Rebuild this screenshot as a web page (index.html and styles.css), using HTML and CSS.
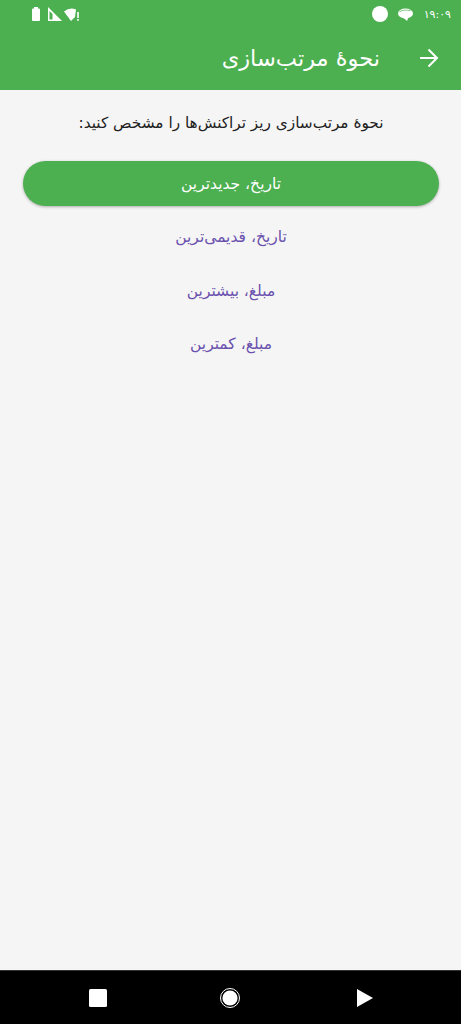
FILE: index.html
```html
<!DOCTYPE html>
<html lang="fa" dir="rtl">
<head>
<meta charset="utf-8">
<title>نحوهٔ مرتب‌سازی</title>
<link rel="stylesheet" href="styles.css">
</head>
<body>
<div class="screen">
  <header class="top">
    <div class="status">
      <div class="status-group">
        <span class="time">۱۹:۰۹</span>
        <svg width="15" height="13" viewBox="0 0 15 13"><ellipse cx="7.500" cy="5.500" rx="7.500" ry="5" fill="#fff"/><path d="M4.500 9L9 13L10.500 9Z" fill="#fff"/><path d="M1.500 4C4 1.800 8.500 1.600 12.500 2.800" fill="none" stroke="#4CAF50" stroke-width=".7"/></svg>
        <span class="dot"></span>
      </div>
      <div class="status-group left">
        <svg width="16" height="13" viewBox="0 0 16 13"><path d="M0 3.500Q6-1.500 12 1.500L11 9 7 13z" fill="#fff"/><rect x="13.200" y="4" width="1.600" height="6" fill="#fff"/><rect x="13.200" y="11" width="1.600" height="1.800" fill="#fff"/></svg>
        <svg width="14" height="14" viewBox="0 0 14 14"><path d="M0 0V14H14Z" fill="#fff"/><path d="M1.500 4V12.500H4.500V7Z" fill="#4CAF50"/></svg>
        <svg width="8" height="14" viewBox="0 0 8 14"><path d="M0 2.500Q0 1.500 1 1.500H2V0H6V1.500H7Q8 1.500 8 2.500V13Q8 14 7 14H1Q0 14 0 13Z" fill="#fff"/></svg>
      </div>
    </div>
    <div class="toolbar">
      <svg class="back" width="24" height="24" viewBox="0 0 24 24"><path d="M3 12H20M11.500 3.500L20 12L11.500 20.500" fill="none" stroke="#fff" stroke-width="2"/></svg>
      <h1 class="title">نحوهٔ مرتب‌سازی</h1>
    </div>
  </header>
  <main class="content">
    <p class="prompt">نحوهٔ مرتب‌سازی ریز تراکنش‌ها را مشخص کنید:</p>
    <ul class="options">
      <li class="option selected">تاریخ، جدیدترین</li>
      <li class="option">تاریخ، قدیمی‌ترین</li>
      <li class="option">مبلغ، بیشترین</li>
      <li class="option">مبلغ، کمترین</li>
    </ul>
  </main>
  <nav class="navbar">
    <svg width="18" height="18" viewBox="0 0 18 18"><rect width="18" height="18" rx="1.500" fill="#fff"/></svg>
    <svg class="home" width="20" height="20" viewBox="0 0 20 20"><circle cx="10" cy="10" r="9.500" fill="none" stroke="#fff"/><circle cx="10" cy="10" r="7.600" fill="#fff"/></svg>
    <svg width="18" height="18" viewBox="0 0 18 18"><path d="M1 0L17 9L1 18Z" fill="#fff"/></svg>
  </nav>
</div>
</body>
</html>
```
FILE: styles.css
```css
* { box-sizing: border-box; }
html, body { margin: 0; padding: 0; }
body { font-family: "DejaVu Sans", sans-serif; background: #f5f5f5; }
.screen { width: 461px; height: 1024px; display: flex; flex-direction: column; overflow: hidden; }
.top { height: 90px; background: #4caf50; color: #fff; flex: none; }
.status { height: 26px; display: flex; justify-content: space-between; align-items: center; padding: 2px 10px 0 32px; }
.status-group { display: flex; align-items: center; gap: 10px; }
.status-group.left { gap: 2px; }
.status-group.left svg:last-child { margin-inline-start: 6px; }
.time { font-size: 11px; width: 26px; text-align: center; margin-inline-end: 2px; }
.dot { width: 16px; height: 16px; border-radius: 50%; background: #fff; }
.toolbar { height: 64px; display: flex; align-items: center; padding: 0 20px 0 0; gap: 37px; }
.back { flex: none; }
.title { margin: 0; font-size: 22.5px; font-weight: 400; line-height: 1; }
.content { flex: 1; padding: 22px 22px 0 23px; }
.prompt { margin: 0; text-align: center; font-size: 15.3px; line-height: 22px; color: #212121; }
.options { list-style: none; margin: 27px 0 0; padding: 0; }
.option { height: 45px; margin-bottom: 8.500px; display: flex; align-items: center; justify-content: center; border-radius: 23px; font-size: 15.500px; color: #6a51ae; }
.selected { background: #4caf50; color: #fff; box-shadow: 0 1px 3px rgba(0,0,0,.3); }
.navbar { height: 54px; flex: none; background: #000; border-top: 1px solid #333; display: flex; align-items: center; justify-content: space-between; padding: 0 87px 0 89px; direction: ltr; }
.home { margin-left: -3px; }
```
